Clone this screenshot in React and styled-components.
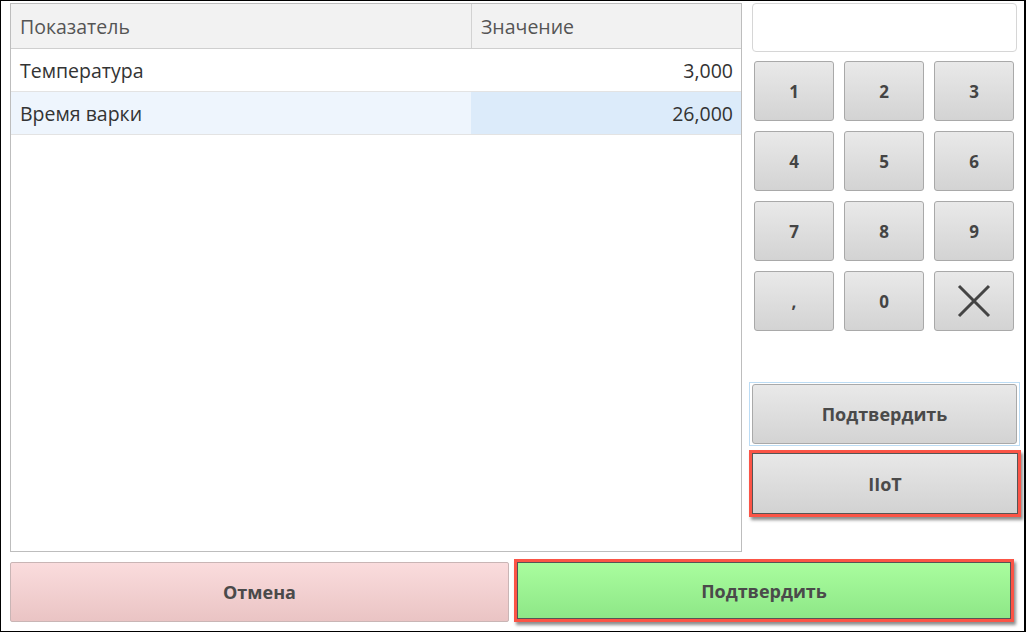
import React from "react";
import styled, { createGlobalStyle } from "styled-components";

const Global = createGlobalStyle`
  html, body { margin: 0; padding: 0; background: #fff; }
  * { box-sizing: border-box; }
`;

const Frame = styled.div`
  width: 1026px;
  height: 632px;
  border: 1px solid #000;
  border-right-width: 2px;
  background: #fff;
  font-family: "Open Sans", "Noto Sans", sans-serif;
  display: grid;
  grid-template-columns: 732px 265px;
  grid-template-rows: 549px 1fr;
  column-gap: 10px;
  padding: 2px 0 0 9px;
`;

const Table = styled.div`
  border: 1px solid #bdbdbd;
  display: flex;
  flex-direction: column;
`;

const Row = styled.div`
  display: grid;
  grid-template-columns: 460px 1fr;
  height: ${(p) => (p.$head ? 45 : 43)}px;
  border-bottom: 1px solid ${(p) => (p.$head ? "#cfcfcf" : "#e3e3e3")};
  background: ${(p) => (p.$head ? "#f2f2f2" : "#fff")};
`;

const Cell = styled.div`
  display: flex;
  align-items: center;
  justify-content: ${(p) => (p.$right ? "flex-end" : "flex-start")};
  padding: 0 8px 0 9px;
  font-size: 19.5px;
  color: ${(p) => (p.$head ? "#555" : "#333")};
  background: ${(p) => p.$bg || "transparent"};
  border-left: ${(p) => (p.$divider ? "1px solid #d2d2d2" : "none")};
`;

const Panel = styled.div`
  display: flex;
  flex-direction: column;
`;

const Display = styled.div`
  height: 49px;
  border: 1px solid #d6d6d6;
  border-radius: 4px;
`;

const Keypad = styled.div`
  display: grid;
  grid-template-columns: repeat(3, 80px);
  grid-auto-rows: 60px;
  gap: 10px;
  margin: 9px 0 0 2px;
`;

const Key = styled.button`
  border: 1px solid #a9a9a9;
  border-radius: 3px;
  background: linear-gradient(#e9e9e9, #d3d3d3);
  font-family: "Open Sans", "Noto Sans", sans-serif;
  font-weight: 700;
  font-size: 17px;
  color: #444;
  display: flex;
  align-items: center;
  justify-content: center;
  padding: 0;
`;

const FocusRing = styled.div`
  margin: 51px -3px 0 -3px;
  padding: 1px 2px 1px 2px;
  border: 1px solid #bcdcf4;
`;

const WideButton = styled.button`
  width: 100%;
  height: 60px;
  border: 1px solid #a9a9a9;
  border-radius: 3px;
  background: linear-gradient(#e9e9e9, #d3d3d3);
  font-family: "Open Sans", "Noto Sans", sans-serif;
  font-weight: 700;
  font-size: 18px;
  color: #4a4a4a;
  display: flex;
  align-items: center;
  justify-content: center;
`;

const Marked = styled.div`
  margin: ${(p) => p.$margin};
  border: 3px solid #fb5446;
  box-shadow: 2px 3px 3px rgba(0, 0, 0, 0.45);
  display: flex;
`;

const InnerButton = styled.button`
  flex: 1;
  height: ${(p) => p.$h}px;
  border: 1px solid #555;
  background: ${(p) =>
    p.$green
      ? "linear-gradient(#a9fd9e, #8ee787)"
      : "linear-gradient(#e8e8e8, #d2d2d2)"};
  font-family: "Open Sans", "Noto Sans", sans-serif;
  font-weight: 700;
  font-size: 18px;
  color: #4a4a4a;
`;

const Bottom = styled.div`
  grid-column: 1 / span 2;
  display: grid;
  grid-template-columns: 499px 1fr;
  column-gap: 5px;
  align-items: start;
`;

const CancelButton = styled.button`
  margin-top: 10px;
  height: 60px;
  border: 1px solid #c9b5b5;
  border-radius: 2px;
  background: linear-gradient(#fadcdd, #eac4c4);
  font-family: "Open Sans", "Noto Sans", sans-serif;
  font-weight: 700;
  font-size: 18px;
  color: #4a4a4a;
`;

const XIcon = () => (
  <svg width="34" height="34" viewBox="0 0 34 34">
    <path d="M2 2 L32 32 M32 2 L2 32" stroke="#444" strokeWidth="3" fill="none" />
  </svg>
);

const rows = [
  { name: "Температура", value: "3,000" },
  { name: "Время варки", value: "26,000", selected: true },
];

const keys = ["1", "2", "3", "4", "5", "6", "7", "8", "9", ",", "0", "x"];

export default function App() {
  return (
    <>
      <Global />
      <Frame>
        <Table>
          <Row $head>
            <Cell $head>Показатель</Cell>
            <Cell $head $divider>Значение</Cell>
          </Row>
          {rows.map((r) => (
            <Row key={r.name}>
              <Cell $bg={r.selected ? "#eef5fd" : undefined}>{r.name}</Cell>
              <Cell $right $bg={r.selected ? "#dcebfa" : undefined}>
                {r.value}
              </Cell>
            </Row>
          ))}
        </Table>
        <Panel>
          <Display />
          <Keypad>
            {keys.map((k) => (
              <Key key={k}>{k === "x" ? <XIcon /> : k}</Key>
            ))}
          </Keypad>
          <FocusRing>
            <WideButton>Подтвердить</WideButton>
          </FocusRing>
          <Marked $margin="4px -4px 0 -3px">
            <InnerButton $h={61}>IIoT</InnerButton>
          </Marked>
        </Panel>
        <Bottom>
          <CancelButton>Отмена</CancelButton>
          <Marked $margin="7px 3px 0 0">
            <InnerButton $green $h={57}>Подтвердить</InnerButton>
          </Marked>
        </Bottom>
      </Frame>
    </>
  );
}
